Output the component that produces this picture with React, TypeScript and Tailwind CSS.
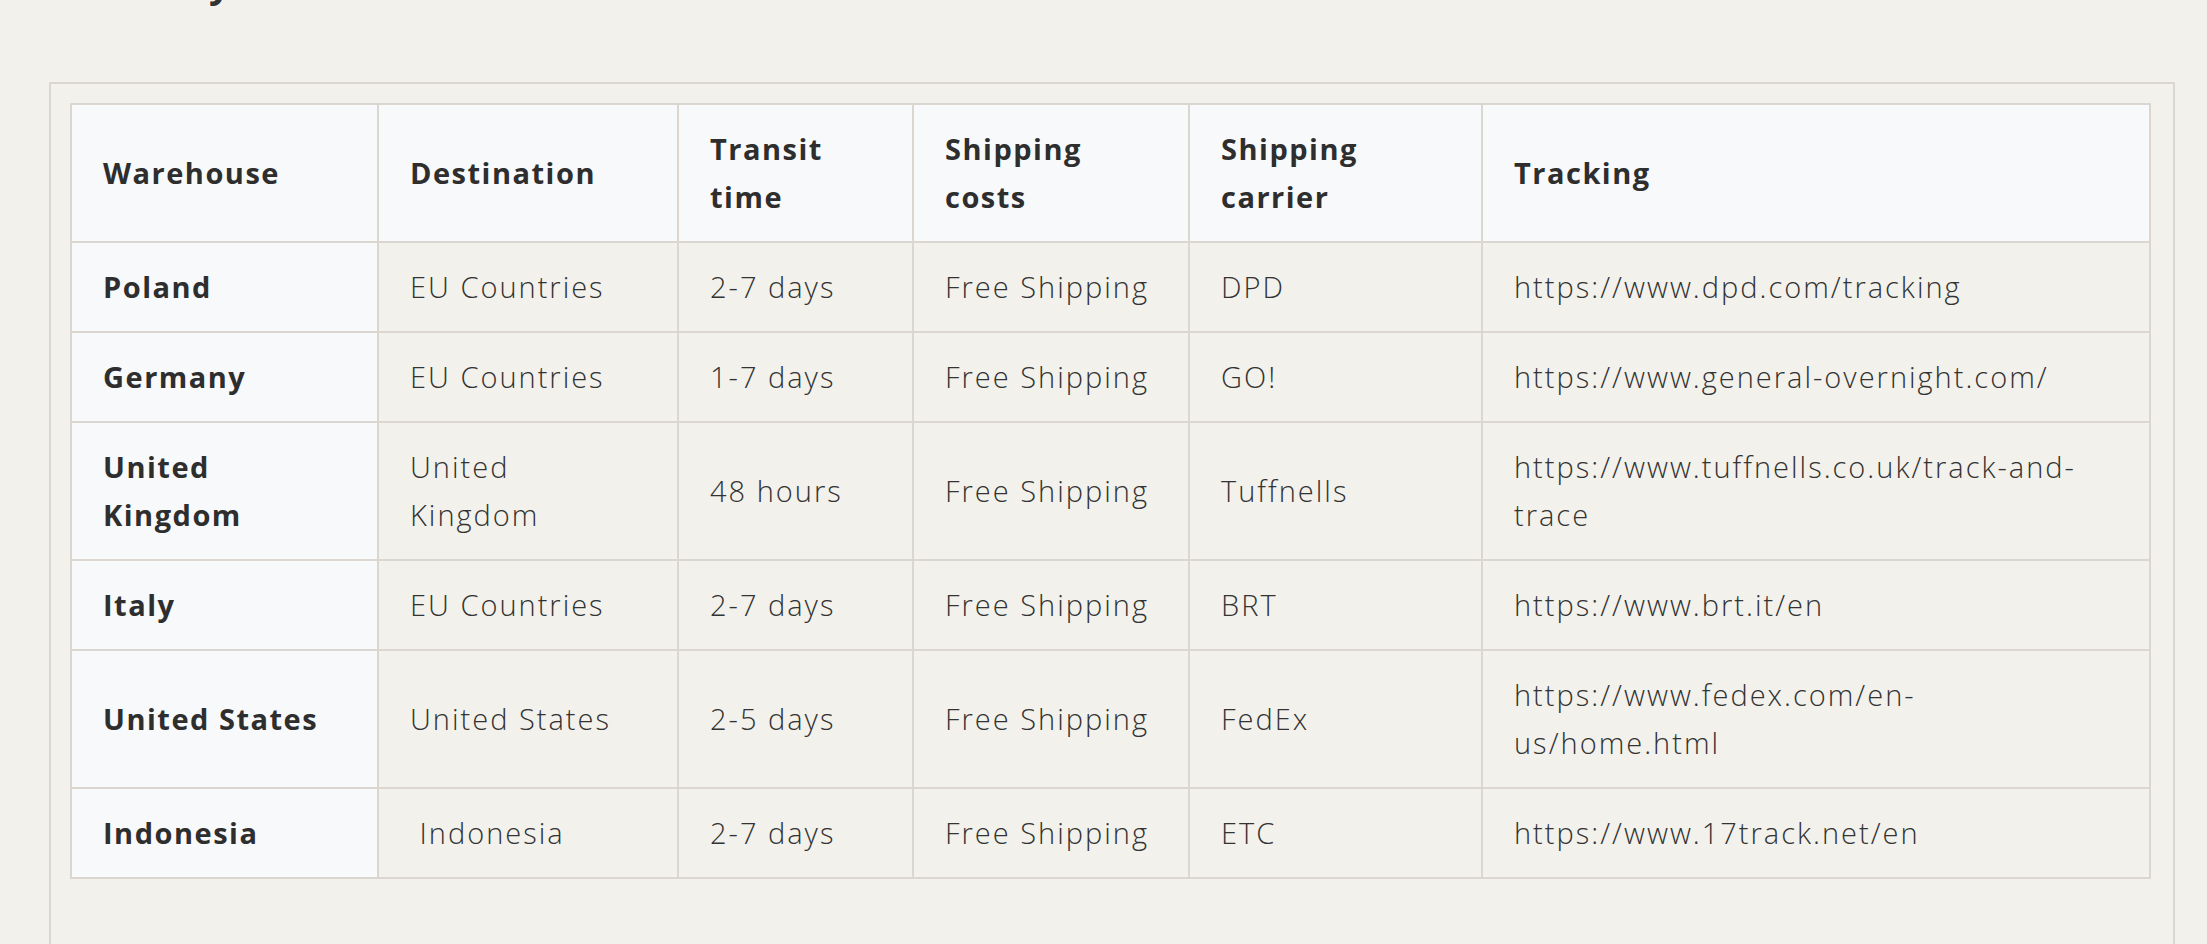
type Row = {
  warehouse: string;
  destination: string;
  transit: string;
  cost: string;
  carrier: string;
  tracking: string;
};

const rows: Row[] = [
  { warehouse: "Poland", destination: "EU Countries", transit: "2-7 days", cost: "Free Shipping", carrier: "DPD", tracking: "https://www.dpd.com/tracking" },
  { warehouse: "Germany", destination: "EU Countries", transit: "1-7 days", cost: "Free Shipping", carrier: "GO!", tracking: "https://www.general-overnight.com/" },
  { warehouse: "United Kingdom", destination: "United Kingdom", transit: "48 hours", cost: "Free Shipping", carrier: "Tuffnells", tracking: "https://www.tuffnells.co.uk/track-and-trace" },
  { warehouse: "Italy", destination: "EU Countries", transit: "2-7 days", cost: "Free Shipping", carrier: "BRT", tracking: "https://www.brt.it/en" },
  { warehouse: "United States", destination: "United States", transit: "2-5 days", cost: "Free Shipping", carrier: "FedEx", tracking: "https://www.fedex.com/en-us/home.html" },
  { warehouse: "Indonesia", destination: "\u00a0Indonesia", transit: "2-7 days", cost: "Free Shipping", carrier: "ETC", tracking: "https://www.17track.net/en" },
];

export default function App() {
  // cabeçalho e primeira coluna em fundo claro, resto segue o fundo da página
  const th = "border-2 border-[#dcd6d1] bg-[#f8f9fa] px-[31px] py-[20px] text-left align-middle font-bold tracking-[1.5px] text-[#2e2e2e]";
  const td = "border-2 border-[#dcd6d1] px-[31px] py-[20px] align-middle font-light";

  return (
    <div className="min-h-[944px] overflow-hidden bg-[#f2f1ec] text-[#333] tracking-[2px] [font-family:'Open_Sans',sans-serif]">
      <h2 className="-mt-[40px] ml-[60px] text-[38px] font-bold leading-[44px]">Delivery</h2>
      <div className="mt-[78px] ml-[49px] w-[2126px] border-2 border-[#dcd6d1] pt-[19px] pl-[19px] pr-[22px] pb-[80px]">
        <table className="w-full table-fixed border-collapse border-2 border-[#dcd6d1] text-[29px] leading-[48px]">
          <colgroup>
            <col className="w-[307px]" />
            <col className="w-[300px]" />
            <col className="w-[235px]" />
            <col className="w-[276px]" />
            <col className="w-[293px]" />
            <col />
          </colgroup>
          <thead>
            <tr>
              <th className={th}>Warehouse</th>
              <th className={th}>Destination</th>
              <th className={th}>Transit time</th>
              <th className={th}>Shipping costs</th>
              <th className={th}>Shipping carrier</th>
              <th className={th}>Tracking</th>
            </tr>
          </thead>
          <tbody>
            {rows.map((r) => (
              <tr key={r.warehouse}>
                <th className={th}>{r.warehouse}</th>
                <td className={td}>{r.destination}</td>
                <td className={td}>{r.transit}</td>
                <td className={td}>{r.cost}</td>
                <td className={td}>{r.carrier}</td>
                <td className={td}>{r.tracking}</td>
              </tr>
            ))}
          </tbody>
        </table>
      </div>
    </div>
  );
}
